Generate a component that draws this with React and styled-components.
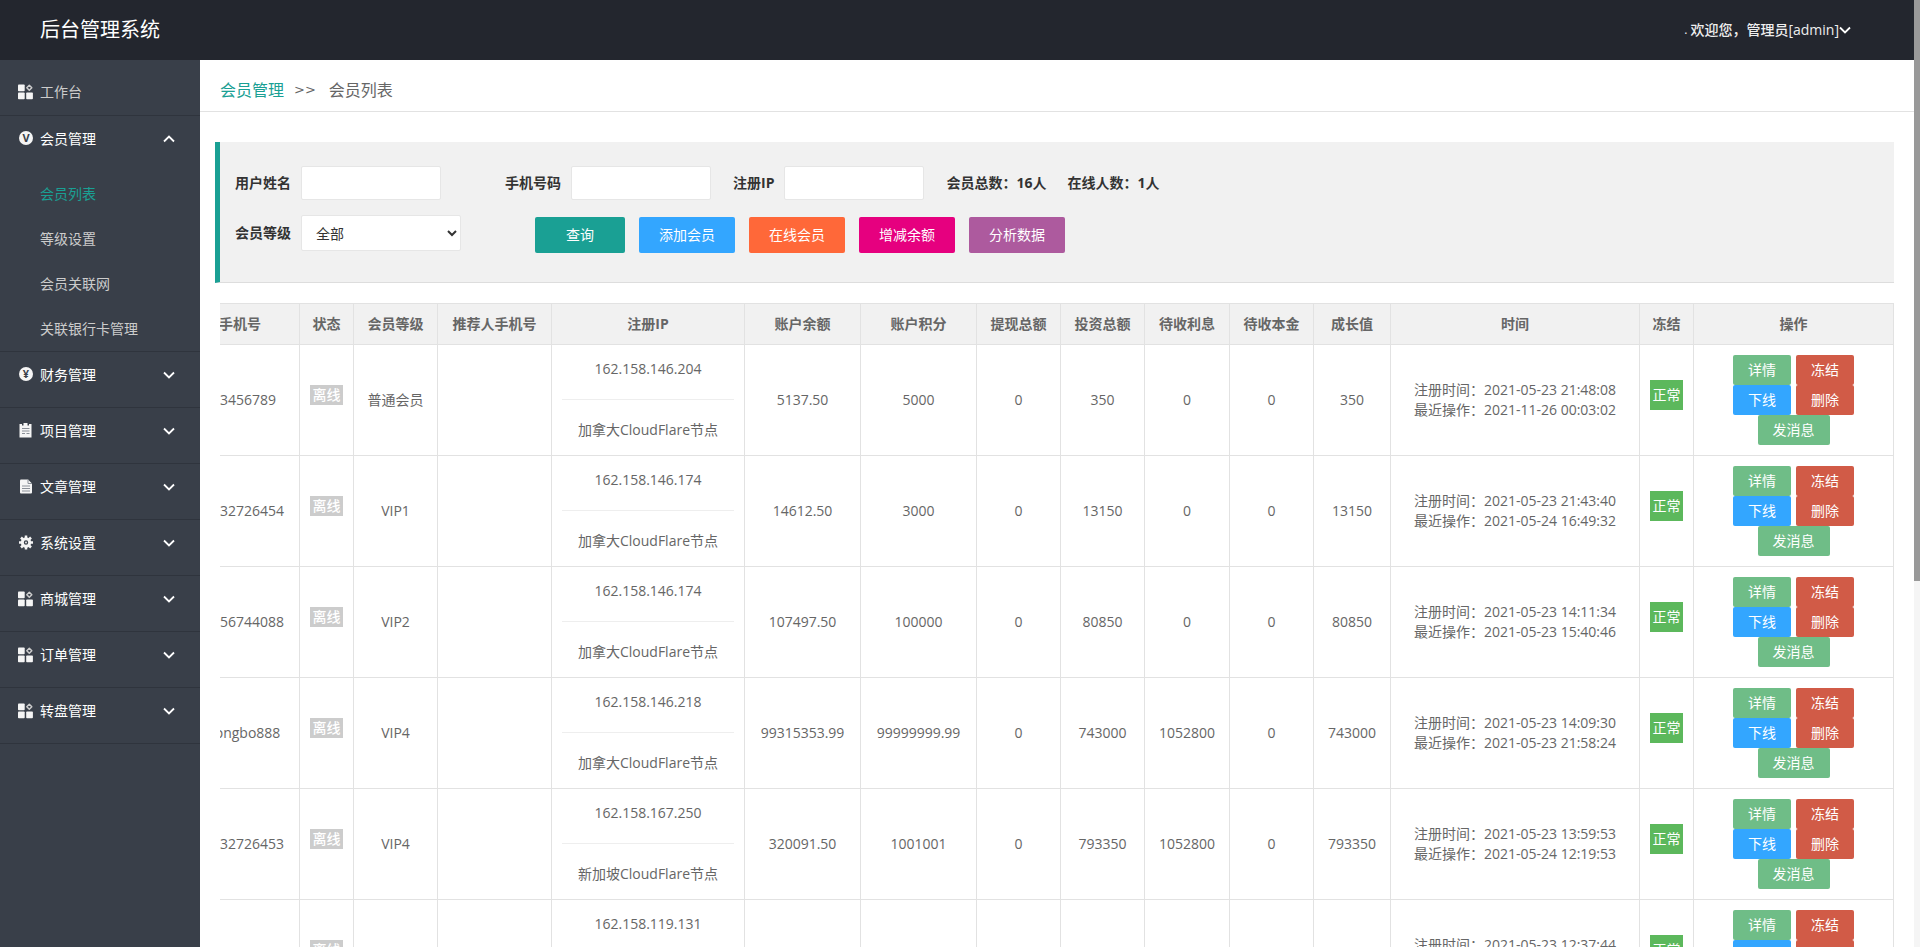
import React, { useState } from 'react';
import styled, { createGlobalStyle } from 'styled-components';

const colors = {
  header: '#23262e',
  side: '#393f49',
  sideLine: '#2f343d',
  primary: '#1aa094',
  panel: '#f1f1f1',
  line: '#e2e2e2',
  text: '#666',
  dark: '#333',
  blue: '#33a6ff',
  orange: '#ff6839',
  pink: '#e6007f',
  purple: '#ad5a9e',
  green: '#6fbd87',
  red: '#d15b47',
  normal: '#5cb85c',
};

const GlobalStyle = createGlobalStyle`
  * {
    box-sizing: border-box;
  }
  body {
    margin: 0;
    color: ${colors.text};
    background: #fff;
    font: 14px/20px 'Open Sans', 'Noto Sans CJK SC', sans-serif;
  }
  button, input, select {
    font: inherit;
  }
  a {
    color: inherit;
    text-decoration: none;
  }
`;

const Screen = styled.div`
  display: flex;
  height: 100vh;
  overflow: hidden;
`;

const Page = styled.div`
  display: flex;
  flex: 1;
  flex-direction: column;
  min-width: 0;
`;

const ScrollTrack = styled.div`
  flex: none;
  width: 6px;
  background: #f5f5f5;
`;

const ScrollThumb = styled.div`
  height: 581px;
  background: #999;
`;

const TopBar = styled.header`
  display: flex;
  flex: none;
  align-items: center;
  justify-content: space-between;
  height: 60px;
  padding: 0 63px 0 40px;
  color: #fff;
  background: ${colors.header};
`;

const Brand = styled.h1`
  margin: 0;
  font-size: 20px;
  font-weight: 400;
  line-height: 62px;
`;

const UserButton = styled.button`
  display: flex;
  align-items: center;
  padding: 0;
  border: 0;
  color: #eee;
  background: none;
  font-weight: 500;
  cursor: pointer;
`;

const Dot = styled.span`
  margin-right: 3px;
  font-size: 12px;
  font-weight: 400;
`;

const Body = styled.div`
  display: flex;
  flex: 1;
  min-height: 0;
`;

const Sidebar = styled.nav`
  flex: none;
  width: 200px;
  padding-top: 10px;
  background: ${colors.side};
`;

const Group = styled.div`
  padding-bottom: ${(props) => (props.$flush ? 0 : 10)}px;
  border-bottom: 1px solid ${colors.sideLine};
`;

const MenuLink = styled.a`
  display: flex;
  align-items: center;
  gap: 6px;
  height: 45px;
  padding: 0 25px 1px 18px;
  color: #ccc;
`;

const MenuButton = styled.button`
  display: flex;
  align-items: center;
  gap: 6px;
  width: 100%;
  height: 45px;
  padding: 0 25px 0 18px;
  border: 0;
  color: #fff;
  background: none;
  text-align: left;
  cursor: pointer;
`;

const MenuText = styled.span`
  flex: 1;
`;

const MenuIcon = styled.svg`
  flex: none;
  width: 16px;
  height: 16px;
  fill: #f5f5f5;
`;

const SubMenu = styled.div`
  padding-top: 10px;
`;

const SubLink = styled.a`
  display: block;
  padding-left: 40px;
  color: ${(props) => (props.$active ? colors.primary : '#ccc')};
  line-height: 45px;
`;

const Content = styled.main`
  flex: 1;
  min-width: 0;
  overflow: hidden;
`;

const Breadcrumb = styled.div`
  display: flex;
  align-items: center;
  height: 52px;
  padding: 8px 20px 0;
  border-bottom: 1px solid ${colors.line};
  font-size: 16px;

  a {
    color: ${colors.primary};
  }
`;

const Separator = styled.span`
  margin: 0 13px 0 10px;
  font-family: 'DejaVu Sans', sans-serif;
  font-size: 13px;
`;

const Filters = styled.form`
  margin: 30px 20px 20px 15px;
  padding: 24px 15px 29px;
  border-bottom: 1px solid #ddd;
  border-left: 5px solid ${colors.primary};
  background: ${colors.panel};
  color: ${colors.dark};
`;

const FilterRow = styled.div`
  display: flex;
  flex-wrap: wrap;
  align-items: flex-start;

  & + & {
    margin-top: 15px;
  }
`;

const Field = styled.label`
  display: flex;
  align-items: center;
  gap: 10px;
  margin-right: ${(props) => props.$after || 22}px;
  font-weight: 700;
`;

const TextInput = styled.input`
  width: 140px;
  height: 34px;
  padding: 0 10px;
  border: 1px solid #e6e6e6;
  border-radius: 2px;
  background: #fff;
`;

const Select = styled.select`
  width: 160px;
  height: 36px;
  padding: 0 0 0 10px;
  border: 1px solid #e6e6e6;
  border-radius: 2px;
  color: ${colors.dark};
  background: #fff;
  font-weight: 400;
`;

const Stat = styled.span`
  margin-right: 21px;
  font-weight: 700;
  line-height: 34px;
`;

const Actions = styled.div`
  display: flex;
  gap: 14px;
  padding-top: 2px;
`;

const Button = styled.button`
  height: 36px;
  padding: 0 ${(props) => (props.$wide ? 31 : 20)}px;
  border: 0;
  border-radius: 2px;
  color: #fff;
  background: ${(props) => props.$color};
  cursor: pointer;
`;

// the table is scrolled to its right end
const TableBox = styled.div`
  display: flex;
  justify-content: flex-end;
  margin: 0 20px;
  overflow: hidden;
`;

const Table = styled.table`
  flex: none;
  width: calc(100% + 39px);
  border-spacing: 0;
  border-top: 1px solid ${colors.line};
  table-layout: fixed;
  text-align: center;
`;

const HeadCell = styled.th`
  height: 41px;
  padding: 0;
  border-right: 1px solid ${colors.line};
  border-bottom: 1px solid ${colors.line};
  background: ${colors.panel};
  font-weight: 700;
`;

const Cell = styled.td`
  height: 111px;
  padding: 0;
  border-right: 1px solid ${colors.line};
  border-bottom: 1px solid ${colors.line};
`;

const BadgeCell = styled(Cell)`
  padding-bottom: 10px;
`;

const IpCell = styled(Cell)`
  padding: 0 10px 2px;
`;

const IpLine = styled.div`
  line-height: 28px;
`;

const Rule = styled.hr`
  margin: 16px 0;
  border: 0;
  border-top: 1px solid #eee;
`;

const Badge = styled.span`
  display: block;
  width: 33px;
  margin: 0 auto;
  color: #fff;
  background: ${(props) => (props.$normal ? colors.normal : '#ccc')};
  font-weight: ${(props) => (props.$normal ? 400 : 500)};
  line-height: ${(props) => (props.$normal ? 30 : 20)}px;
`;

const RowActions = styled.div`
  display: flex;
  flex-wrap: wrap;
  justify-content: center;
  width: 121px;
  margin: 0 auto;
  column-gap: 5px;
`;

const SmallButton = styled.button`
  height: 30px;
  padding: 0 15px;
  border: 0;
  border-radius: 2px;
  color: #fff;
  background: ${(props) => props.$color};
  cursor: pointer;
`;

const Arrow = ({ up }) => (
  <svg width="12" height="12" viewBox="0 0 12 12" fill="none" stroke="#fff" strokeWidth="1.8">
    <path d={up ? 'M1 8.5 6 3.5 11 8.5' : 'M1 3.5 6 8.5 11 3.5'} />
  </svg>
);

const GridIcon = () => (
  <MenuIcon viewBox="0 0 16 16">
    <rect x="0" y="0.500" width="6.700" height="6.700" rx="0.800" />
    <rect x="0" y="8.500" width="6.700" height="6.700" rx="0.800" />
    <rect x="8.200" y="8.500" width="6.700" height="6.700" rx="0.800" />
    <path
      d="M11.300 1.200 13.800 3.700 11.300 6.200 8.800 3.700Z"
      fill="none"
      stroke="#ccc"
      strokeWidth="1.5"
      strokeLinejoin="round"
    />
  </MenuIcon>
);

const CoinIcon = ({ sign }) => (
  <MenuIcon viewBox="0 0 16 16">
    <circle cx="8" cy="7" r="7" />
    <text x="8" y="11" textAnchor="middle" fontSize="11" fontWeight="700" fill={colors.side}>
      {sign}
    </text>
  </MenuIcon>
);

const ClipboardIcon = () => (
  <MenuIcon viewBox="0 0 16 16">
    <path d="M1.500 1h2.500v1.500h1.500V0h4v2.500H11V1h2.500v13.500h-12z" />
    <path d="M4 5.500h7.500M4 8h7.500M4 10.500h3M8.500 10.500h3" stroke="#8b9098" />
  </MenuIcon>
);

const FileIcon = () => (
  <MenuIcon viewBox="0 0 16 16">
    <path d="M2 1.500q0-1 1-1h7l4 4v9q0 1-1 1H3q-1 0-1-1z" />
    <path d="M4 7h8M4 9.500h8M4 12h8M10 0.500v4h4" stroke="#8b9098" fill="none" />
  </MenuIcon>
);

const GearIcon = () => (
  <MenuIcon viewBox="0 0 16 16">
    <circle cx="8" cy="7.500" r="3.700" fill="none" stroke="#f5f5f5" strokeWidth="3" />
    <path
      d="M8 0.500v2.500M8 12V14.500M1 7.500h2.500M12.500 7.500H15M3 2.500l2 2M11 10.500l2 2M3 12.500l2-2M11 4.500l2-2"
      stroke="#f5f5f5"
      strokeWidth="2.5"
    />
    <circle cx="8" cy="7.500" r="0.900" />
  </MenuIcon>
);

const members = ['会员列表', '等级设置', '会员关联网', '关联银行卡管理'];

const groups = [
  { name: '会员管理', icon: <CoinIcon sign="V" />, items: members },
  { name: '财务管理', icon: <CoinIcon sign="¥" /> },
  { name: '项目管理', icon: <ClipboardIcon /> },
  { name: '文章管理', icon: <FileIcon /> },
  { name: '系统设置', icon: <GearIcon /> },
  { name: '商城管理', icon: <GridIcon /> },
  { name: '订单管理', icon: <GridIcon /> },
  { name: '转盘管理', icon: <GridIcon /> },
];

// the time column has no width and takes the space that is left
const columns = [
  ['手机号', 119],
  ['状态', 54],
  ['会员等级', 84],
  ['推荐人手机号', 114],
  ['注册IP', 193],
  ['账户余额', 116],
  ['账户积分', 116],
  ['提现总额', 84],
  ['投资总额', 84],
  ['待收利息', 85],
  ['待收本金', 84],
  ['成长值', 77],
  ['时间'],
  ['冻结', 54],
  ['操作', 200],
];

const canada = '加拿大CloudFlare节点';
const singapore = '新加坡CloudFlare节点';

const rows = [
  {
    phone: '123456789', level: '普通会员', ip: '162.158.146.204', place: canada,
    numbers: ['5137.50', '5000', '0', '350', '0', '0', '350'],
    created: '2021-05-23 21:48:08', updated: '2021-11-26 00:03:02',
  },
  {
    phone: '13832726454', level: 'VIP1', ip: '162.158.146.174', place: canada,
    numbers: ['14612.50', '3000', '0', '13150', '0', '0', '13150'],
    created: '2021-05-23 21:43:40', updated: '2021-05-24 16:49:32',
  },
  {
    phone: '13856744088', level: 'VIP2', ip: '162.158.146.174', place: canada,
    numbers: ['107497.50', '100000', '0', '80850', '0', '0', '80850'],
    created: '2021-05-23 14:11:34', updated: '2021-05-23 15:40:46',
  },
  {
    phone: 'zhongbo888', level: 'VIP4', ip: '162.158.146.218', place: canada,
    numbers: ['99315353.99', '99999999.99', '0', '743000', '1052800', '0', '743000'],
    created: '2021-05-23 14:09:30', updated: '2021-05-23 21:58:24',
  },
  {
    phone: '13832726453', level: 'VIP4', ip: '162.158.167.250', place: singapore,
    numbers: ['320091.50', '1001001', '0', '793350', '1052800', '0', '793350'],
    created: '2021-05-23 13:59:53', updated: '2021-05-24 12:19:53',
  },
  {
    phone: '13832726452', level: 'VIP4', ip: '162.158.119.131', place: singapore,
    numbers: ['320091.50', '1001001', '0', '793350', '1052800', '0', '793350'],
    created: '2021-05-23 12:37:44', updated: '2021-05-23 12:40:12',
  },
];

const MemberRow = ({ row }) => (
  <tr>
    <Cell>{row.phone}</Cell>
    <BadgeCell>
      <Badge>离线</Badge>
    </BadgeCell>
    <Cell>{row.level}</Cell>
    <Cell />
    <IpCell>
      <IpLine>{row.ip}</IpLine>
      <Rule />
      <IpLine>{row.place}</IpLine>
    </IpCell>
    {row.numbers.map((value, i) => (
      <Cell key={i}>{value}</Cell>
    ))}
    <Cell>
      注册时间：{row.created}
      <br />
      最近操作：{row.updated}
    </Cell>
    <BadgeCell>
      <Badge $normal>正常</Badge>
    </BadgeCell>
    <Cell>
      <RowActions>
        <SmallButton $color={colors.green}>详情</SmallButton>
        <SmallButton $color={colors.red}>冻结</SmallButton>
        <SmallButton $color={colors.blue}>下线</SmallButton>
        <SmallButton $color={colors.red}>删除</SmallButton>
        <SmallButton $color={colors.green}>发消息</SmallButton>
      </RowActions>
    </Cell>
  </tr>
);

const Menu = () => {
  const [open, setOpen] = useState('会员管理');

  return (
    <Sidebar>
      <Group $flush>
        <MenuLink href="#">
          <GridIcon />
          <MenuText>工作台</MenuText>
        </MenuLink>
      </Group>
      {groups.map(({ name, icon, items }) => {
        const expanded = open === name;
        return (
          <Group key={name} $flush={expanded && items}>
            <MenuButton
              type="button"
              aria-expanded={expanded}
              onClick={() => setOpen(expanded ? '' : name)}
            >
              {icon}
              <MenuText>{name}</MenuText>
              <Arrow up={expanded} />
            </MenuButton>
            {expanded && items && (
              <SubMenu>
                {items.map((item, i) => (
                  <SubLink key={item} href="#" $active={i === 0}>
                    {item}
                  </SubLink>
                ))}
              </SubMenu>
            )}
          </Group>
        );
      })}
    </Sidebar>
  );
};

const FilterPanel = () => (
  <Filters onSubmit={(e) => e.preventDefault()}>
    <FilterRow>
      <Field $after={64}>
        用户姓名
        <TextInput type="text" name="username" />
      </Field>
      <Field>
        手机号码
        <TextInput type="text" name="mobile" />
      </Field>
      <Field>
        注册IP
        <TextInput type="text" name="ip" />
      </Field>
      <Stat>会员总数：16人</Stat>
      <Stat>在线人数：1人</Stat>
    </FilterRow>
    <FilterRow>
      <Field $after={74}>
        会员等级
        <Select name="level">
          <option>全部</option>
          <option>普通会员</option>
          <option>VIP1</option>
          <option>VIP2</option>
          <option>VIP4</option>
        </Select>
      </Field>
      <Actions>
        <Button type="submit" $wide $color={colors.primary}>查询</Button>
        <Button type="button" $color={colors.blue}>添加会员</Button>
        <Button type="button" $color={colors.orange}>在线会员</Button>
        <Button type="button" $color={colors.pink}>增减余额</Button>
        <Button type="button" $color={colors.purple}>分析数据</Button>
      </Actions>
    </FilterRow>
  </Filters>
);

const App = () => (
  <>
    <GlobalStyle />
    <Screen>
      <Page>
        <TopBar>
          <Brand>后台管理系统</Brand>
          <UserButton type="button">
            <Dot>.</Dot>
            <span>欢迎您，管理员[admin]</span>
            <Arrow />
          </UserButton>
        </TopBar>
        <Body>
          <Menu />
          <Content>
            <Breadcrumb>
              <a href="#">会员管理</a>
              <Separator>&gt;&gt;</Separator>
              <span>会员列表</span>
            </Breadcrumb>
            <FilterPanel />
            <TableBox>
              <Table>
                <colgroup>
                  {columns.map(([name, width]) => (
                    <col key={name} width={width} />
                  ))}
                </colgroup>
                <thead>
                  <tr>
                    {columns.map(([name]) => (
                      <HeadCell key={name}>{name}</HeadCell>
                    ))}
                  </tr>
                </thead>
                <tbody>
                  {rows.map((row) => (
                    <MemberRow key={row.phone} row={row} />
                  ))}
                </tbody>
              </Table>
            </TableBox>
          </Content>
        </Body>
      </Page>
      <ScrollTrack>
        <ScrollThumb />
      </ScrollTrack>
    </Screen>
  </>
);

export default App;
